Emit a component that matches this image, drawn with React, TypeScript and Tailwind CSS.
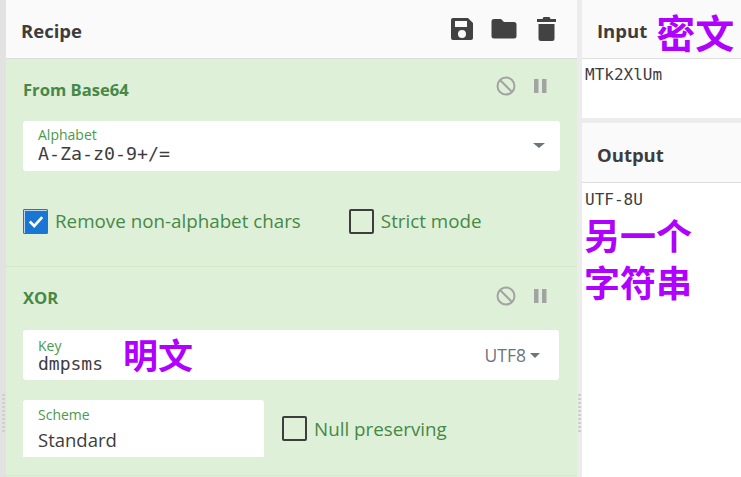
const mono = "font-['DejaVu_Sans_Mono','Liberation_Mono',monospace]"
const cjk = "font-['Noto_Sans_CJK_SC',sans-serif] font-bold text-[#b000ff]"

function Grip({ className }: { className: string }) {
  return (
    <div className={`absolute top-[394px] flex flex-col gap-[2px] ${className}`}>
      {Array.from({ length: 10 }).map((_, i) => (
        <div key={i} className="h-[2px] w-[3px] bg-[#cfcfcf]" />
      ))}
    </div>
  )
}

function OpIcons() {
  return (
    <div className="flex items-center gap-[18px]">
      <svg width="20" height="20" viewBox="0 0 20 20" fill="none" stroke="#a3a3a3" strokeWidth="2">
        <circle cx="10" cy="10" r="8.5" />
        <path d="M4 4l12 12" />
      </svg>
      <svg width="13" height="14" viewBox="0 0 13 14" fill="#a3a3a3">
        <rect x="0" y="0" width="4.5" height="14" />
        <rect x="8" y="0" width="4.5" height="14" />
      </svg>
    </div>
  )
}

function Check({ checked, label }: { checked?: boolean; label: string }) {
  return (
    <div className="flex items-center gap-[7px]">
      {checked ? (
        <div className="flex h-[25px] w-[25px] items-center justify-center rounded-[2px] bg-[#1976d2] ring-1 ring-inset ring-[#1976d2]">
          <div className="flex h-[23px] w-[23px] items-center justify-center border-l border-t border-white/70">
            <svg width="16" height="13" viewBox="0 0 18 14" fill="none" stroke="#fff" strokeWidth="3">
              <path d="M2 7l5 5 9-10" />
            </svg>
          </div>
        </div>
      ) : (
        <div className="h-[25px] w-[25px] rounded-[2px] border-2 border-[#3d3d3d]" />
      )}
      <span className="pt-[1px] text-[18.8px] leading-[25px] text-[#468847]">{label}</span>
    </div>
  )
}

export default function App() {
  return (
    <div className="relative flex h-[477px] w-[741px] overflow-hidden bg-[#ececec] font-['Open_Sans','Noto_Sans',sans-serif]">
      <div className="w-[6px] shrink-0 bg-[#e2e2e2]" />

      {/* Recipe */}
      <div className="flex w-[571px] shrink-0 flex-col">
        <div className="flex h-[59px] shrink-0 items-center justify-between border-b border-[#dddddd] bg-[#fafafa] pl-[15px] pr-[21px]">
          <span className="pt-[3px] text-[18.5px] font-bold text-[#3d3d3d]">Recipe</span>
          <div className="flex items-center pb-[1px]">
            <svg width="24" height="24" viewBox="0 0 24 24" fill="#424242">
              <path fillRule="evenodd" d="M3 1h15l5 5v15a2 2 0 0 1-2 2H3a2 2 0 0 1-2-2V3a2 2 0 0 1 2-2zm2 3v6h12V4H5zm7 9a4 4 0 1 0 0 8 4 4 0 0 0 0-8z" />
            </svg>
            <svg className="ml-[17px]" width="26" height="22" viewBox="0 0 26 22" fill="#424242">
              <path d="M3 1h7l3 3h10a2.5 2.5 0 0 1 2.5 2.5V18a2.5 2.5 0 0 1-2.5 2.5H3A2.5 2.5 0 0 1 .5 18V3.5A2.5 2.5 0 0 1 3 1z" />
            </svg>
            <svg className="ml-[20px]" width="19" height="24" viewBox="0 0 19 24" fill="#424242">
              <path d="M6.5 0h6l1 2H19v3H0V2h5.5l1-2zM1.5 7h16v14.5a2.5 2.5 0 0 1-2.5 2.5H4a2.5 2.5 0 0 1-2.5-2.5V7z" />
            </svg>
          </div>
        </div>

        {/* From Base64 */}
        <div className="flex h-[208px] shrink-0 flex-col border-b border-[#d5e8c8] bg-[#dff0d8] pl-[17px] pr-[17px]">
          <div className="flex h-[62px] shrink-0 items-center justify-between pr-[13px]">
            <span className="text-[16.6px] font-bold text-[#468847]">From Base64</span>
            <div className="pb-[8px]">
              <OpIcons />
            </div>
          </div>
          <div className="relative flex h-[50px] shrink-0 flex-col rounded-[3px] bg-white px-[15px] pt-[5px]">
            <span className="text-[14px] leading-[17px] text-[#4a9a4c]">Alphabet</span>
            <span className={`${mono} text-[18.3px] leading-[21px] text-[#3d3d3d]`}>A-Za-z0-9+/=</span>
            <div className="absolute right-[15px] top-[22px] h-0 w-0 border-x-[6px] border-t-[5px] border-x-transparent border-t-[#6c757d]" />
          </div>
          <div className="mt-[37px] flex items-center gap-[48px]">
            <Check checked label="Remove non-alphabet chars" />
            <Check label="Strict mode" />
          </div>
        </div>

        {/* XOR */}
        <div className="flex h-[209px] shrink-0 flex-col border-b border-[#d5e8c8] bg-[#dff0d8] pl-[17px] pr-[18px]">
          <div className="flex h-[63px] shrink-0 items-center justify-between pr-[12px]">
            <span className="text-[16.6px] font-bold text-[#468847]">XOR</span>
            <div className="pb-[6px]">
              <OpIcons />
            </div>
          </div>
          <div className="flex h-[50px] shrink-0 items-center justify-between rounded-[3px] bg-white pl-[15px] pr-[19px]">
            <div className="flex items-center gap-[20px]">
              <div className="flex flex-col pt-[2px]">
                <span className="text-[14px] leading-[15px] text-[#4a9a4c]">Key</span>
                <span className={`${mono} text-[18px] leading-[21px] text-[#3d3d3d]`}>dmpsms</span>
              </div>
              <span className={`${cjk} pb-[2px] text-[35px] leading-[40px]`}>明文</span>
            </div>
            <div className="flex items-center gap-[4px]">
              <span className="text-[17.5px] text-[#6c757d]">UTF8</span>
              <div className="h-0 w-0 border-x-[5px] border-t-[5px] border-x-transparent border-t-[#6c757d]" />
            </div>
          </div>
          <div className="mt-[20px] flex items-center gap-[18px]">
            <div className="flex h-[57px] w-[241px] flex-col rounded-t-[3px] bg-white px-[15px] pt-[5px]">
              <span className="text-[14px] leading-[19px] text-[#4a9a4c]">Scheme</span>
              <span className="mt-[3px] text-[18.5px] leading-[25px] text-[#3d3d3d]">Standard</span>
            </div>
            <Check label="Null preserving" />
          </div>
        </div>
        <div className="flex-1 bg-[#dff0d8]" />
      </div>

      <div className="w-[5px] shrink-0 bg-[#ececec]" />

      {/* Input / Output */}
      <div className="flex min-w-0 flex-1 flex-col">
        <div className="flex h-[59px] shrink-0 items-center border-b border-[#dddddd] bg-[#fafafa] pl-[15px]">
          <span className="pt-[3px] text-[18.5px] font-bold text-[#3d3d3d]">Input</span>
          <span className={`${cjk} ml-[9px] pt-[3px] text-[39px] leading-[44px]`}>密文</span>
        </div>
        <div className={`${mono} h-[59px] shrink-0 bg-white pl-[3px] pt-[5px] text-[16px] leading-[22px] text-[#3d3d3d]`}>MTk2XlUm</div>
        <div className="h-[5px] shrink-0 bg-[#ececec]" />
        <div className="flex h-[60px] shrink-0 items-center border-b border-[#dddddd] bg-[#fafafa] pl-[15px]">
          <span className="pt-[5px] text-[18.5px] font-bold text-[#3d3d3d]">Output</span>
        </div>
        <div className="flex-1 bg-white pl-[3px] pt-[6px]">
          <div className={`${mono} text-[16px] leading-[22px] text-[#3d3d3d]`}>UTF-8U</div>
          <div className={`${cjk} -ml-[1px] text-[36px] leading-[47px]`}>
            另一个
            <br />
            字符串
          </div>
        </div>
      </div>

      <Grip className="left-[2px]" />
      <Grip className="left-[578px]" />
    </div>
  )
}
